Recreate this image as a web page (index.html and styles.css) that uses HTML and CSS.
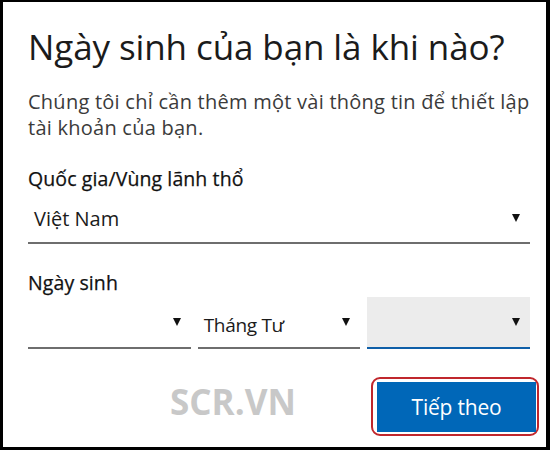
FILE: index.html
```html
<!DOCTYPE html>
<html lang="vi">
<head>
<meta charset="utf-8">
<title>Ngày sinh</title>
<link rel="stylesheet" href="styles.css">
</head>
<body>
<div class="frame">
  <h1 class="title">Ngày sinh của bạn là khi nào?</h1>
  <p class="desc">Chúng tôi chỉ cần thêm một vài thông tin để thiết lập tài khoản của bạn.</p>

  <div class="label label-country">Quốc gia/Vùng lãnh thổ</div>
  <div class="select select-country">
    <span class="select-text">Việt Nam</span>
    <span class="arrow"></span>
  </div>

  <div class="label label-dob">Ngày sinh</div>
  <div class="date-row">
    <div class="select select-date">
      <span class="select-text"></span>
      <span class="arrow"></span>
    </div>
    <div class="select select-date">
      <span class="select-text select-text-sm">Tháng Tư</span>
      <span class="arrow"></span>
    </div>
    <div class="select select-date select-active">
      <span class="select-text"></span>
      <span class="arrow"></span>
    </div>
  </div>

  <div class="footer">
    <div class="watermark">SCR.VN</div>
    <div class="btn-ring">
      <button class="btn-next" type="button">Tiếp theo</button>
    </div>
  </div>
</div>
</body>
</html>
```

FILE: styles.css
```css
* { box-sizing: border-box; }

html, body {
  margin: 0;
  padding: 0;
  background: #000;
}

.frame {
  width: 550px;
  height: 450px;
  background: #fff;
  border-style: solid;
  border-color: #000;
  border-width: 2px 4px 3px 3px;
  padding: 24px 10px 0 25px;
  font-family: "Open Sans", "Noto Sans", sans-serif;
  color: #1b1b1b;
  overflow: hidden;
}

.title {
  margin: 0;
  font-size: 35px;
  line-height: 42px;
  font-weight: 400;
  color: #1b1b1b;
  letter-spacing: -0.1px;
  white-space: nowrap;
}

.desc {
  margin: 21px 0 0;
  width: 512px;
  font-size: 20px;
  line-height: 26px;
  color: #3b3b3b;
  letter-spacing: 0.25px;
}

.label {
  font-size: 19.5px;
  line-height: 24px;
  font-weight: 400;
  color: #111;
  letter-spacing: 0.1px;
  -webkit-text-stroke: 0.25px #111;
}

.label-country { margin-top: 26px; }
.label-dob { margin-top: 27px; }

.select {
  display: flex;
  align-items: center;
  justify-content: space-between;
  border-bottom: 2px solid #6e6e6e;
  padding: 0 10px 0 6px;
}

.select-country {
  margin-top: 7px;
  width: 502px;
  height: 46px;
  padding-bottom: 4px;
}

.select-text {
  font-size: 20px;
  color: #1b1b1b;
  letter-spacing: 0;
}

.select-text-sm {
  font-size: 19px;
  letter-spacing: -0.3px;
}

.arrow {
  width: 0;
  height: 0;
  border-left: 4px solid transparent;
  border-right: 4px solid transparent;
  border-top: 8px solid #111;
}

.date-row {
  display: flex;
  gap: 7px;
  margin-top: 2px;
  width: 502px;
}

.select-date {
  flex: 1 1 0;
  height: 52px;
  padding-top: 6px;
}

.select-date .arrow {
  margin-bottom: 6px;
}

.select-active {
  background: #ececec;
  border-bottom-color: #0f5fa8;
}

.footer {
  display: flex;
  align-items: center;
  justify-content: flex-end;
  margin-top: 28px;
  width: 511px;
  position: relative;
}

.watermark {
  position: absolute;
  left: 142px;
  top: 1px;
  font-family: "Open Sans", sans-serif;
  font-weight: 700;
  font-size: 35px;
  color: #c8c8c8;
  letter-spacing: 0;
}

.btn-ring {
  border: 2px solid #c0272d;
  border-radius: 9px;
  padding: 3px 1px 2px 4px;
}

.btn-next {
  display: block;
  width: 159px;
  height: 50px;
  border: 0;
  background: #0067b8;
  color: #fff;
  font-family: "Open Sans", sans-serif;
  font-size: 21px;
  letter-spacing: -0.2px;
  padding: 0;
}
```
